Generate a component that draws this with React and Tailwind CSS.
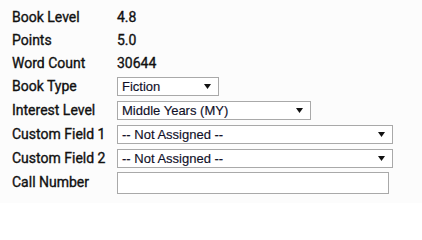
import { useState } from 'react';

// Small filled triangle used as the dropdown arrow
const Caret = () => (
  <svg width="7" height="5" viewBox="0 0 7 5" className="shrink-0">
    <path d="M0 0 H7 L3.5 5 Z" fill="#111" />
  </svg>
);

// Select-like field
const FakeSelect = ({ value, width }) => (
  <div
    className={`flex items-center justify-between h-[19px] border border-[#a9a9a9] bg-white pl-[4px] pr-[7px] ${width}`}
  >
    <span className="font-['Liberation_Sans',Arial,sans-serif] font-normal text-[13px] leading-none text-[#101028] whitespace-nowrap [-webkit-text-stroke:0.15px_#101028]">
      {value}
    </span>
    <Caret />
  </div>
);

const Row = ({ label, height = 'h-[23px]', children }) => (
  <div className={`flex items-center ${height}`}>
    <div className="w-[105px] shrink-0 [-webkit-text-stroke:0.35px_#111]">{label}</div>
    <div>{children}</div>
  </div>
);

const App = () => {
  const [callNumber, setCallNumber] = useState('');

  return (
    <div className="w-[422px] h-[203px] bg-[#fcfcfc] pt-[6px] pl-[12px] font-['Roboto',sans-serif] font-normal text-[14px] text-[#111] overflow-hidden">
      <Row label="Book Level">
        <span className="[-webkit-text-stroke:0.35px_#111]">4.8</span>
      </Row>
      <Row label="Points">
        <span className="[-webkit-text-stroke:0.35px_#111]">5.0</span>
      </Row>
      <Row label="Word Count">
        <span className="[-webkit-text-stroke:0.35px_#111]">30644</span>
      </Row>
      <Row label="Book Type">
        <FakeSelect value="Fiction" width="w-[102px]" />
      </Row>
      <Row label="Interest Level" height="h-[24px]">
        <FakeSelect value="Middle Years (MY)" width="w-[194px]" />
      </Row>
      <Row label="Custom Field 1" height="h-[24px]">
        <FakeSelect value="-- Not Assigned --" width="w-[276px]" />
      </Row>
      <Row label="Custom Field 2" height="h-[24px]">
        <FakeSelect value="-- Not Assigned --" width="w-[276px]" />
      </Row>
      <Row label="Call Number" height="h-[25px]">
        <input
          type="text"
          value={callNumber}
          onChange={(e) => setCallNumber(e.target.value)}
          className="block w-[272px] h-[22px] border border-[#a9a9a9] bg-white px-1 outline-none"
        />
      </Row>
    </div>
  );
};

export default App;
